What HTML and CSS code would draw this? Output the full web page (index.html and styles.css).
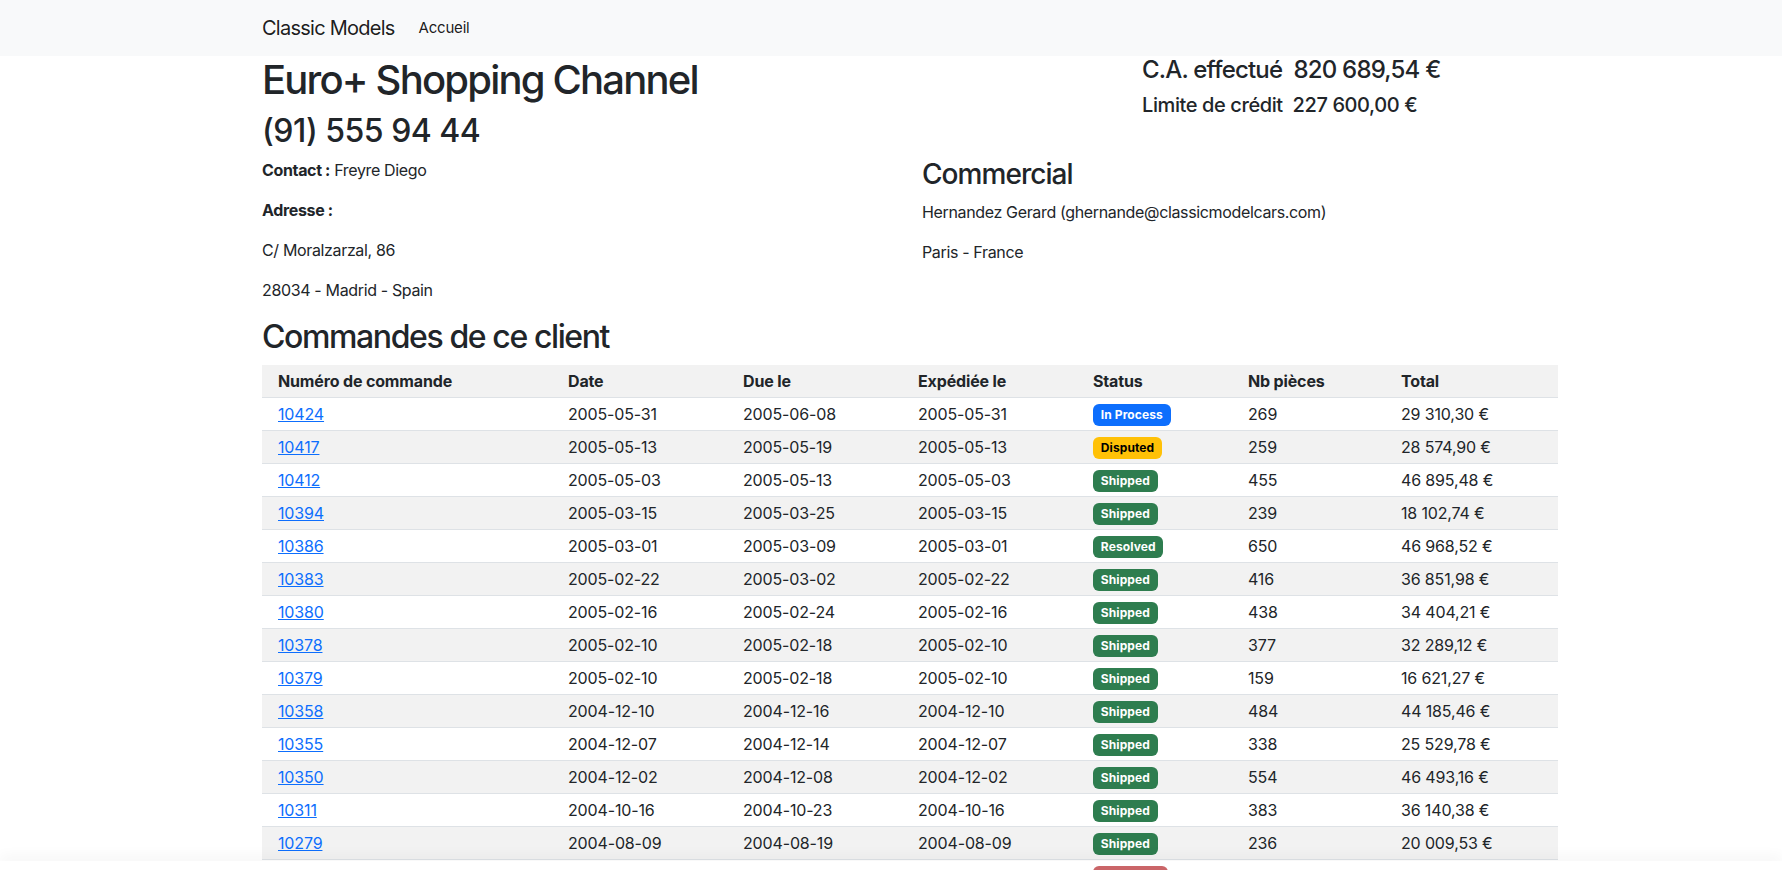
FILE: index.html
```html
<!DOCTYPE html>
<html lang="fr">
<head>
<meta charset="utf-8">
<title>Classic Models</title>
<link rel="stylesheet" href="styles.css">
</head>
<body>
<nav class="navbar">
  <div class="container nav-inner">
    <a class="brand" href="#">Classic Models</a>
    <a class="nav-link" href="#">Accueil</a>
  </div>
</nav>
<main class="container">
  <div class="row">
    <div class="col">
      <h1 class="h1">Euro+ Shopping Channel</h1>
      <h2 class="h2">(91) 555 94 44</h2>
    </div>
    <div class="col">
      <div class="ca">
        <h4 class="h4">C.A. effectué&nbsp; 820 689,54 €</h4>
        <h5 class="h5">Limite de crédit&nbsp; 227 600,00 €</h5>
      </div>
    </div>
  </div>
  <div class="row">
    <div class="col">
      <p><strong>Contact :</strong> Freyre Diego</p>
      <p><strong>Adresse :</strong></p>
      <p>C/ Moralzarzal, 86</p>
      <p>28034 - Madrid - Spain</p>
    </div>
    <div class="col">
      <h3 class="h3">Commercial</h3>
      <p>Hernandez Gerard (ghernande@classicmodelcars.com)</p>
      <p>Paris - France</p>
    </div>
  </div>
  <h2 class="h2 section">Commandes de ce client</h2>
  <table class="orders">
    <colgroup>
      <col class="c1"><col class="c2"><col class="c3"><col class="c4"><col class="c5"><col class="c6"><col class="c7">
    </colgroup>
    <tbody>
      <tr class="head"><th>Numéro de commande</th><th>Date</th><th>Due le</th><th>Expédiée le</th><th>Status</th><th>Nb pièces</th><th>Total</th></tr>
      <tr><td><a href="#">10424</a></td><td>2005-05-31</td><td>2005-06-08</td><td>2005-05-31</td><td><span class="badge b-primary">In Process</span></td><td>269</td><td>29 310,30 €</td></tr>
      <tr><td><a href="#">10417</a></td><td>2005-05-13</td><td>2005-05-19</td><td>2005-05-13</td><td><span class="badge b-warning">Disputed</span></td><td>259</td><td>28 574,90 €</td></tr>
      <tr><td><a href="#">10412</a></td><td>2005-05-03</td><td>2005-05-13</td><td>2005-05-03</td><td><span class="badge b-success">Shipped</span></td><td>455</td><td>46 895,48 €</td></tr>
      <tr><td><a href="#">10394</a></td><td>2005-03-15</td><td>2005-03-25</td><td>2005-03-15</td><td><span class="badge b-success">Shipped</span></td><td>239</td><td>18 102,74 €</td></tr>
      <tr><td><a href="#">10386</a></td><td>2005-03-01</td><td>2005-03-09</td><td>2005-03-01</td><td><span class="badge b-success">Resolved</span></td><td>650</td><td>46 968,52 €</td></tr>
      <tr><td><a href="#">10383</a></td><td>2005-02-22</td><td>2005-03-02</td><td>2005-02-22</td><td><span class="badge b-success">Shipped</span></td><td>416</td><td>36 851,98 €</td></tr>
      <tr><td><a href="#">10380</a></td><td>2005-02-16</td><td>2005-02-24</td><td>2005-02-16</td><td><span class="badge b-success">Shipped</span></td><td>438</td><td>34 404,21 €</td></tr>
      <tr><td><a href="#">10378</a></td><td>2005-02-10</td><td>2005-02-18</td><td>2005-02-10</td><td><span class="badge b-success">Shipped</span></td><td>377</td><td>32 289,12 €</td></tr>
      <tr><td><a href="#">10379</a></td><td>2005-02-10</td><td>2005-02-18</td><td>2005-02-10</td><td><span class="badge b-success">Shipped</span></td><td>159</td><td>16 621,27 €</td></tr>
      <tr><td><a href="#">10358</a></td><td>2004-12-10</td><td>2004-12-16</td><td>2004-12-10</td><td><span class="badge b-success">Shipped</span></td><td>484</td><td>44 185,46 €</td></tr>
      <tr><td><a href="#">10355</a></td><td>2004-12-07</td><td>2004-12-14</td><td>2004-12-07</td><td><span class="badge b-success">Shipped</span></td><td>338</td><td>25 529,78 €</td></tr>
      <tr><td><a href="#">10350</a></td><td>2004-12-02</td><td>2004-12-08</td><td>2004-12-02</td><td><span class="badge b-success">Shipped</span></td><td>554</td><td>46 493,16 €</td></tr>
      <tr><td><a href="#">10311</a></td><td>2004-10-16</td><td>2004-10-23</td><td>2004-10-16</td><td><span class="badge b-success">Shipped</span></td><td>383</td><td>36 140,38 €</td></tr>
      <tr><td><a href="#">10279</a></td><td>2004-08-09</td><td>2004-08-19</td><td>2004-08-09</td><td><span class="badge b-success">Shipped</span></td><td>236</td><td>20 009,53 €</td></tr>
      <tr><td><a href="#">10262</a></td><td>2004-06-24</td><td>2004-07-01</td><td></td><td><span class="badge b-danger">Cancelled</span></td><td>605</td><td>47 065,36 €</td></tr>
    </tbody>
  </table>
</main>
<div class="window-edge"></div>
</body>
</html>
```

FILE: styles.css
```css
* { box-sizing: border-box; }

html, body {
  margin: 0;
  padding: 0;
}

body {
  font-family: Inter, "Noto Sans", "Liberation Sans", sans-serif;
  font-size: 16px;
  line-height: 1.5;
  color: #212529;
  background: #fff;
  overflow: hidden;
}

.container {
  width: 1320px;
  padding: 0 12px;
  margin-left: 250px;
}

.navbar {
  background: #f8f9fa;
  padding: 8px 0;
}

.nav-inner {
  display: flex;
  align-items: center;
}

.brand {
  font-size: 20px;
  line-height: 30px;
  padding: 5px 0;
  margin-right: 16px;
  color: rgba(0, 0, 0, 0.9);
  text-decoration: none;
  letter-spacing: -0.75px;
}

.nav-link {
  font-size: 15px;
  padding: 8px;
  color: rgba(0, 0, 0, 0.9);
  text-decoration: none;
  letter-spacing: -0.2px;
}

.row {
  display: grid;
  grid-template-columns: 1fr 1fr;
  column-gap: 24px;
}

.h1, .h2, .h3, .h4, .h5 {
  margin: 0 0 8px;
  font-weight: 500;
  line-height: 1.2;
  color: #212529;
}

.h1 { font-size: 40px; letter-spacing: -1.8px; }
.h2 { font-size: 32px; letter-spacing: -0.5px; }
.h2.section { letter-spacing: -1.4px; }
.h3 { font-size: 28px; letter-spacing: -0.95px; }
.h4 { font-size: 24px; letter-spacing: -0.8px; }
.h5 { font-size: 20px; letter-spacing: -0.4px; }

.ca {
  margin-left: 220px;
}

p {
  margin: 0 0 16px;
  letter-spacing: -0.35px;
}

strong { font-weight: 700; }

.orders {
  width: 1296px;
  border-collapse: collapse;
  table-layout: fixed;
  margin-bottom: 16px;
}

.c1 { width: 290px; }
.c2 { width: 175px; }
.c3 { width: 175px; }
.c4 { width: 175px; }
.c5 { width: 155px; }
.c6 { width: 153px; }
.c7 { width: 173px; }

.orders th,
.orders td {
  padding: 4px 16px;
  text-align: left;
  vertical-align: top;
  border-bottom: 1px solid #dee2e6;
  white-space: nowrap;
  letter-spacing: -0.15px;
}

.orders th { font-weight: 700; }

.orders tr:nth-child(odd) { background: #f2f2f2; }

.orders a {
  color: #0d6efd;
  text-decoration: underline;
}

.badge {
  display: inline-block;
  padding: 0.42em 0.65em 0.4em;
  font-size: 12px;
  font-weight: 700;
  line-height: 1;
  color: #fff;
  border-radius: 6px;
  vertical-align: 1px;
  letter-spacing: 0.1px;
}

.b-primary { background: #0d6efd; }
.b-warning { background: #ffc107; color: #000; }
.b-success { background: #2e7d4f; }
.b-danger { background: #b83236; }

.window-edge {
  position: fixed;
  left: 0;
  right: 0;
  bottom: 0;
  height: 9px;
  background: rgba(255, 255, 255, 0.25);
  box-shadow: 0 -4px 14px rgba(0, 0, 0, 0.05);
}
```
